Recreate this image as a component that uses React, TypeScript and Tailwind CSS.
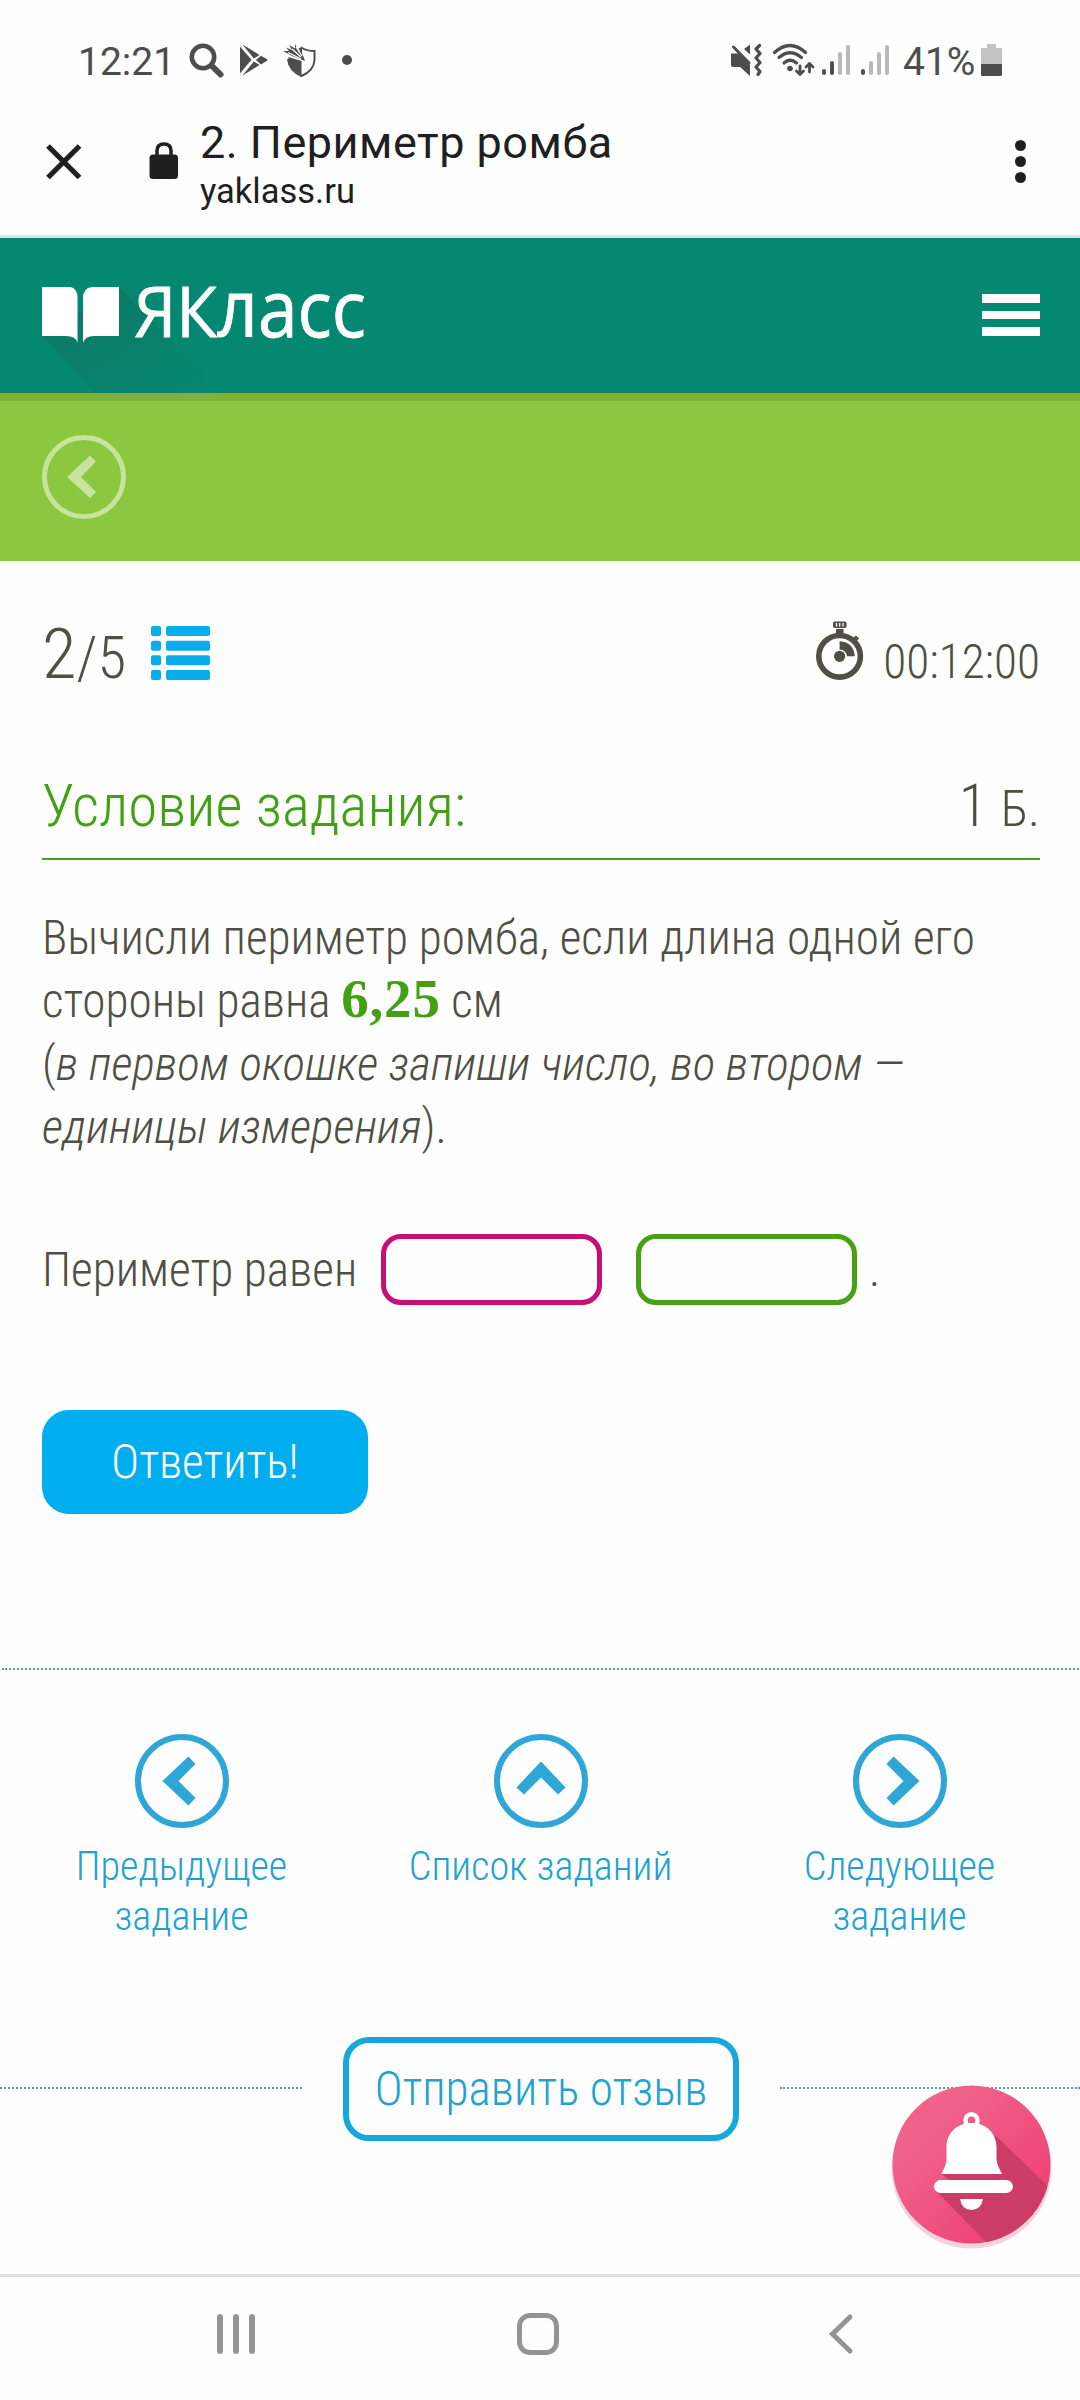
import React from "react";

type Direction = "left" | "up" | "right";

const chevronRotation = {
  left: "rotate-0",
  up: "rotate-90",
  right: "rotate-180",
};

const signalBars = [5, 13, 22, 29];

const SignalIcon = ({ level }: { level: number }) => (
  <div className="flex h-[30px] items-end gap-1">
    {signalBars.map((height, index) => (
      <div
        key={height}
        className={`w-1 rounded-full ${index < level ? "bg-[#4d4d4d]" : "bg-[#b9b9b9]"}`}
        style={{ height: height + 1 }}
      />
    ))}
  </div>
);

const StatusBar = () => (
  <div className="flex h-[115px] items-center justify-between pt-1 pr-[78px] pl-[78px] text-[#4d4d4d]">
    <div className="flex items-center">
      <span className="w-[111px] pt-1 text-[39px] leading-[48px] font-normal">
        12:21
      </span>
      <svg width="36" height="36" viewBox="0 0 36 36" fill="none">
        <circle cx="14" cy="15" r="11.2" stroke="#4d4d4d" strokeWidth="4.6" />
        <path d="M23 24L31.5 32.5" stroke="#4d4d4d" strokeWidth="6" strokeLinecap="round" />
      </svg>
      <svg className="ml-[14px]" width="29" height="34" viewBox="0 0 29 34" fill="#4d4d4d">
        <path d="M1 3.5L12.5 16.8L1 30.5Z" />
        <path d="M3.5 1.5L20.5 12L14.8 15.6Z" />
        <path d="M3.5 32.5L20.5 22L14.8 18.4Z" />
        <path d="M22 12.8L28 16.2Q28.8 17 28 17.8L22 21.4L16.8 17Z" />
      </svg>
      <svg className="ml-[14px]" width="35" height="36" viewBox="0 0 35 36" fill="none">
        <path
          d="M17 7.5L20 6Q25 9 32.5 9V18Q32 28.500 19.500 34Q7 28.500 6 17"
          stroke="#4d4d4d"
          strokeWidth="2"
        />
        <path d="M6.500 15L13 17L19.500 19V33Q8 28 6.500 19Z" fill="#4d4d4d" />
        <path
          d="M1 9L7 9L4 5.500L10 8L7 3L13 6.500V2L17 10L20 4V11L23 19L10 14Z"
          fill="#4d4d4d"
        />
        <path d="M6 10.500L19 17M10 7L19 15M14 5L20 14" stroke="#fff" strokeWidth="1.3" />
      </svg>
      <div className="ml-[25px] h-[10px] w-[10px] rounded-full bg-[#4d4d4d]" />
    </div>
    <div className="flex items-center">
      <svg width="32" height="34" viewBox="0 0 32 34">
        <path d="M1 10.500H8L20 22V33L10 24H3Q1 24 1 22Z" fill="#4d4d4d" />
        <path d="M14 6L20 1.500V11.500Z" fill="#4d4d4d" />
        <path d="M3.500 4L19 20" stroke="#4d4d4d" strokeWidth="3" strokeLinecap="round" />
        <path
          d="M29.500 2.500L26 6L30 10.500L26 15L30 19.500L26 24L30 28.500L28 31.500"
          stroke="#4d4d4d"
          strokeWidth="3.2"
          strokeLinecap="round"
          strokeLinejoin="round"
          fill="none"
        />
      </svg>
      <svg className="ml-[10px]" width="43" height="34" viewBox="0 0 43 34" fill="none">
        <g stroke="#4d4d4d" strokeWidth="3.200" strokeLinecap="round">
          <path d="M2.500 9.500Q18 -4.500 33.500 9.500" />
          <path d="M7 14.500Q18 5 29.500 14.500" />
          <path d="M12 20Q18 14.500 24.500 20" />
        </g>
        <circle cx="18" cy="25.500" r="2.800" fill="#4d4d4d" />
        <g stroke="#4d4d4d" strokeWidth="2.800" strokeLinecap="round" strokeLinejoin="round">
          <path d="M28 23V31.500M24.500 28L28 31.500L31.500 28" />
          <path d="M37.500 29V20.500M34 24L37.500 20.500L41 24" />
        </g>
      </svg>
      <div className="ml-[7px]">
        <SignalIcon level={2} />
      </div>
      <div className="ml-[11px]">
        <SignalIcon level={1} />
      </div>
      <span className="ml-[14px] w-[78px] pt-1 text-[39px] leading-[48px] font-normal">
        41%
      </span>
      <svg width="21" height="34" viewBox="0 0 21 34">
        <path d="M6 1H15V5H20Q21 5 21 6V21H0V6Q0 5 1 5H6Z" fill="#c3c3c3" />
        <path d="M0 21H21V31.500Q21 33 19.500 33H1.500Q0 33 0 31.500Z" fill="#4d4d4d" />
      </svg>
    </div>
  </div>
);

const BrowserBar = () => (
  <div className="flex h-[123px] justify-between border-b-3 border-[#d8e6e3] pr-[54px] pl-[45px] text-[#1f1f1f]">
    <div className="flex">
      <svg className="mt-7" width="37" height="37" viewBox="0 0 37 37">
        <path d="M3 3L34.500 34.500M34.500 3L3 34.500" stroke="#1f1f1f" strokeWidth="5.300" />
      </svg>
      <svg className="mt-[26px] ml-[67px]" width="30" height="40" viewBox="0 0 30 40">
        <path
          d="M8 16V10Q8 3 15 3Q22 3 22 10V16"
          stroke="#1f1f1f"
          strokeWidth="3.500"
          fill="none"
        />
        <rect x="0.500" y="13.500" width="28.500" height="24.500" rx="3.500" fill="#1f1f1f" />
      </svg>
      <div className="ml-[21px] whitespace-nowrap">
        <div className="text-[45px] leading-[56px] tracking-[0.5px]">2. Периметр ромба</div>
        <div className="-mt-px text-[34.5px] leading-[42px]">yaklass.ru</div>
      </div>
    </div>
    <div className="mt-[25px] flex flex-col gap-[5px]">
      <div className="h-[11px] w-[11px] rounded-full bg-[#1f1f1f]" />
      <div className="h-[11px] w-[11px] rounded-full bg-[#1f1f1f]" />
      <div className="h-[11px] w-[11px] rounded-full bg-[#1f1f1f]" />
    </div>
  </div>
);

const Logo = () => (
  <svg width="400" height="155" viewBox="0 238 400 155">
    <defs>
      <linearGradient id="logoShadow" x1="0" y1="0" x2="1" y2="1">
        <stop offset="0" stopColor="#0c7763" />
        <stop offset="1" stopColor="#068771" />
      </linearGradient>
    </defs>
    <path d="M42 336L119 287L222 393H96Z" fill="url(#logoShadow)" />
    <path d="M42 287H70Q77.500 288 77.500 298V343Q76 336 66 336H42Z" fill="#fff" />
    <path d="M119 287H92Q83 288 83 298V343Q85 336 94 336H119Z" fill="#fff" />
    <g fill="#fff" stroke="#fff" strokeWidth="0.800" fontFamily="Open Sans">
      <text x="134" y="336.500" fontSize="69" textLength="83" lengthAdjust="spacingAndGlyphs">
        ЯК
      </text>
      <text x="217" y="336.500" fontSize="79" textLength="149" lengthAdjust="spacingAndGlyphs">
        ласс
      </text>
    </g>
  </svg>
);

const Header = () => (
  <header>
    <div className="flex h-[155px] items-center justify-between border-b border-[#1b7a4a] bg-[#058872] pr-10">
      <Logo />
      <div className="flex flex-col gap-2">
        <div className="h-[9px] w-[58px] bg-white" />
        <div className="h-[8px] w-[58px] bg-white" />
        <div className="h-[9px] w-[58px] bg-white" />
      </div>
    </div>
    <div className="flex h-[168px] items-center border-t-8 border-[#7db338] bg-[#8cc83f] pb-2 pl-[42px]">
      <svg width="84" height="84" viewBox="0 0 84 84">
        <circle cx="42" cy="42" r="39.500" stroke="#c6e49f" strokeWidth="5" fill="none" />
        <path d="M25 42L48 20.500L54 26.500L39 42L54 57L48 63Z" fill="#c6e49f" />
      </svg>
    </div>
  </header>
);

const ListIcon = () => (
  <svg className="mt-[14px] ml-[26px]" width="59" height="54" viewBox="0 0 59 54" fill="#0aaceb">
    {[0, 14.7, 29.3, 44].map((y) => (
      <g key={y}>
        <rect x="0" y={y} width="10" height="10" rx="2" />
        <rect x="15" y={y} width="44" height="10" rx="2" />
      </g>
    ))}
  </svg>
);

const Stopwatch = () => (
  <svg className="mt-[9px]" width="48" height="60" viewBox="0 0 48 60">
    <circle cx="23.600" cy="35.300" r="20.800" stroke="#4f4f43" strokeWidth="5.600" fill="none" />
    <rect x="20" y="8" width="7.500" height="6" fill="#4f4f43" />
    <rect x="17" y="0.500" width="13.500" height="6.500" rx="1.800" fill="#4f4f43" />
    <path d="M20.500 2V5.500M23.700 2V5.500M27 2V5.500" stroke="#fff" strokeWidth="1.300" />
    <path d="M38.500 19L41.500 16" stroke="#4f4f43" strokeWidth="4.500" />
    <path d="M23.600 20.300Q37.500 21 38.800 35.300H31Q30 29 23.600 28.500Z" fill="#4f4f43" />
    <circle cx="23.600" cy="35.300" r="5.600" fill="#4f4f43" />
  </svg>
);

const Task = () => (
  <main className="pt-[51px] pr-10 pl-[42px] font-light text-[#4f4f43]">
    <div className="flex h-[84px] justify-between">
      <div className="flex">
        <div className="w-[83px] whitespace-nowrap text-[71px] leading-[84px]">
          2<span className="text-[59px]">/5</span>
        </div>
        <ListIcon />
      </div>
      <div className="flex">
        <Stopwatch />
        <div className="mt-[20px] ml-[19px] text-[47.2px] leading-[60px]">00:12:00</div>
      </div>
    </div>
    <div className="mt-[74px] flex h-[90px] justify-between border-b-2 border-[#459f1e] text-[59px] leading-[72px]">
      <h2 className="text-[#43a012]">Условие задания:</h2>
      <div>
        1 <span className="text-[50px]">Б.</span>
      </div>
    </div>
    <p className="mt-[47px] h-[252px] text-[47.25px] leading-[63px] whitespace-nowrap">
      Вычисли периметр ромба, если длина одной его
      <br />
      стороны равна{" "}
      <span className="inline-block font-['Liberation_Serif'] text-[55px] leading-none font-bold tracking-[0.8px] text-[#43a012]">
        6,25
      </span>{" "}
      см
      <br />(<i>в первом окошке запиши число, во втором —</i>
      <br />
      <i>единицы измерения</i>).
    </p>
    <div className="mt-[75px] flex text-[47.25px] leading-[73px] whitespace-nowrap">
      <span className="w-[339px]">Периметр равен</span>
      <input className="h-[71px] w-[221px] rounded-[20px] border-5 border-[#c80f76]" />
      <input className="ml-[34px] h-[71px] w-[221px] rounded-[20px] border-5 border-[#48a015]" />
      <span className="ml-[12px]">.</span>
    </div>
    <button className="mt-[103px] block h-[104px] w-[326px] rounded-[27px] bg-[#00aeef] text-[47.2px] text-white">
      Ответить!
    </button>
  </main>
);

const NavLink = ({ direction, label }: { direction: Direction; label: string }) => (
  <a className="flex flex-col items-center">
    <svg
      className={chevronRotation[direction]}
      width="94"
      height="94"
      viewBox="0 0 94 94"
    >
      <circle cx="47" cy="47" r="44" stroke="#2fa6d8" strokeWidth="6" fill="none" />
      <path d="M27.500 47L53.400 22.500L60.500 30L43.500 47L60.500 64L53.400 71.500Z" fill="#2fa6d8" />
    </svg>
    <span className="mt-[14px] h-[99px] text-center text-[40.2px] leading-[50px] font-light whitespace-pre-line text-[#22a1d2]">
      {label}
    </span>
  </a>
);

const BellButton = () => (
  <svg
    className="absolute top-[45px] left-[888px]"
    width="168"
    height="170"
    viewBox="888 2082 168 170"
  >
    <defs>
      <linearGradient id="bellFill" x1="0" y1="0" x2="1" y2="1">
        <stop offset="0.200" stopColor="#f0648c" />
        <stop offset="0.800" stopColor="#ef4475" />
      </linearGradient>
      <clipPath id="bellClip">
        <circle cx="971.500" cy="2164.500" r="79" />
      </clipPath>
    </defs>
    <circle cx="971.500" cy="2168.500" r="80" fill="#f3d3dc" />
    <circle cx="971.500" cy="2164.500" r="79" fill="url(#bellFill)" />
    <path
      d="M996 2136L1056 2194V2252H996L936 2191L950 2181L942 2174Z"
      fill="#cb3d66"
      clipPath="url(#bellClip)"
    />
    <ellipse cx="971.500" cy="2120.500" rx="6" ry="6.200" stroke="#fff" strokeWidth="4.500" fill="none" />
    <path
      d="M971.500 2123C987 2123 996.500 2134 996.500 2147V2158C996.500 2165 1000 2169 1002 2174H941.500C943.500 2169 946.500 2165 946.500 2158V2147C946.500 2134 956 2123 971.500 2123Z"
      fill="#fff"
    />
    <rect x="934" y="2180" width="79" height="13" rx="6.500" fill="#fff" />
    <path d="M960 2199H983Q981 2210 971.500 2210Q962 2210 960 2199Z" fill="#fff" />
  </svg>
);

const Footer = () => (
  <footer className="mt-[154px]">
    <div className="mr-px ml-0.5 grid grid-cols-3 border-t-2 border-dotted border-[#4a9fb8] pt-[64px]">
      <NavLink direction="left" label={"Предыдущее\nзадание"} />
      <NavLink direction="up" label="Список заданий" />
      <NavLink direction="right" label={"Следующее\nзадание"} />
    </div>
    <div className="relative mt-[96px] flex h-[104px] items-center">
      <div className="mb-0.5 w-[302px] border-t-2 border-dotted border-[#5b9aa5]" />
      <button className="mx-[41px] h-[104px] w-[396px] rounded-[26px] border-6 border-[#16a8dd] text-[47.2px] font-light whitespace-nowrap text-[#22a1d2]">
        Отправить отзыв
      </button>
      <div className="mb-0.5 flex-1 border-t-2 border-dotted border-[#5b9aa5]" />
      <BellButton />
    </div>
  </footer>
);

const SystemNav = () => (
  <div className="mt-[133px] flex h-[117px] items-center border-t-3 border-[#e0e0e0] pl-[217px]">
    <div className="flex w-[38px] justify-between">
      <div className="h-10 w-[6px] rounded-full bg-[#949494]" />
      <div className="h-10 w-[6px] rounded-full bg-[#949494]" />
      <div className="h-10 w-[6px] rounded-full bg-[#949494]" />
    </div>
    <div className="ml-[262px] h-[42px] w-[42px] rounded-[13px] border-5 border-[#949494]" />
    <svg className="ml-[269px]" width="26" height="42" viewBox="0 0 26 42">
      <path
        d="M22 4L4.500 21L22 38"
        stroke="#949494"
        strokeWidth="5"
        strokeLinecap="round"
        fill="none"
      />
    </svg>
  </div>
);

export default function App() {
  return (
    <div className="h-[2400px] w-[1080px] overflow-hidden bg-[#fefefe] font-[Roboto,sans-serif]">
      <StatusBar />
      <BrowserBar />
      <Header />
      <div className="[font-stretch:75%]">
        <Task />
        <Footer />
      </div>
      <SystemNav />
    </div>
  );
}
